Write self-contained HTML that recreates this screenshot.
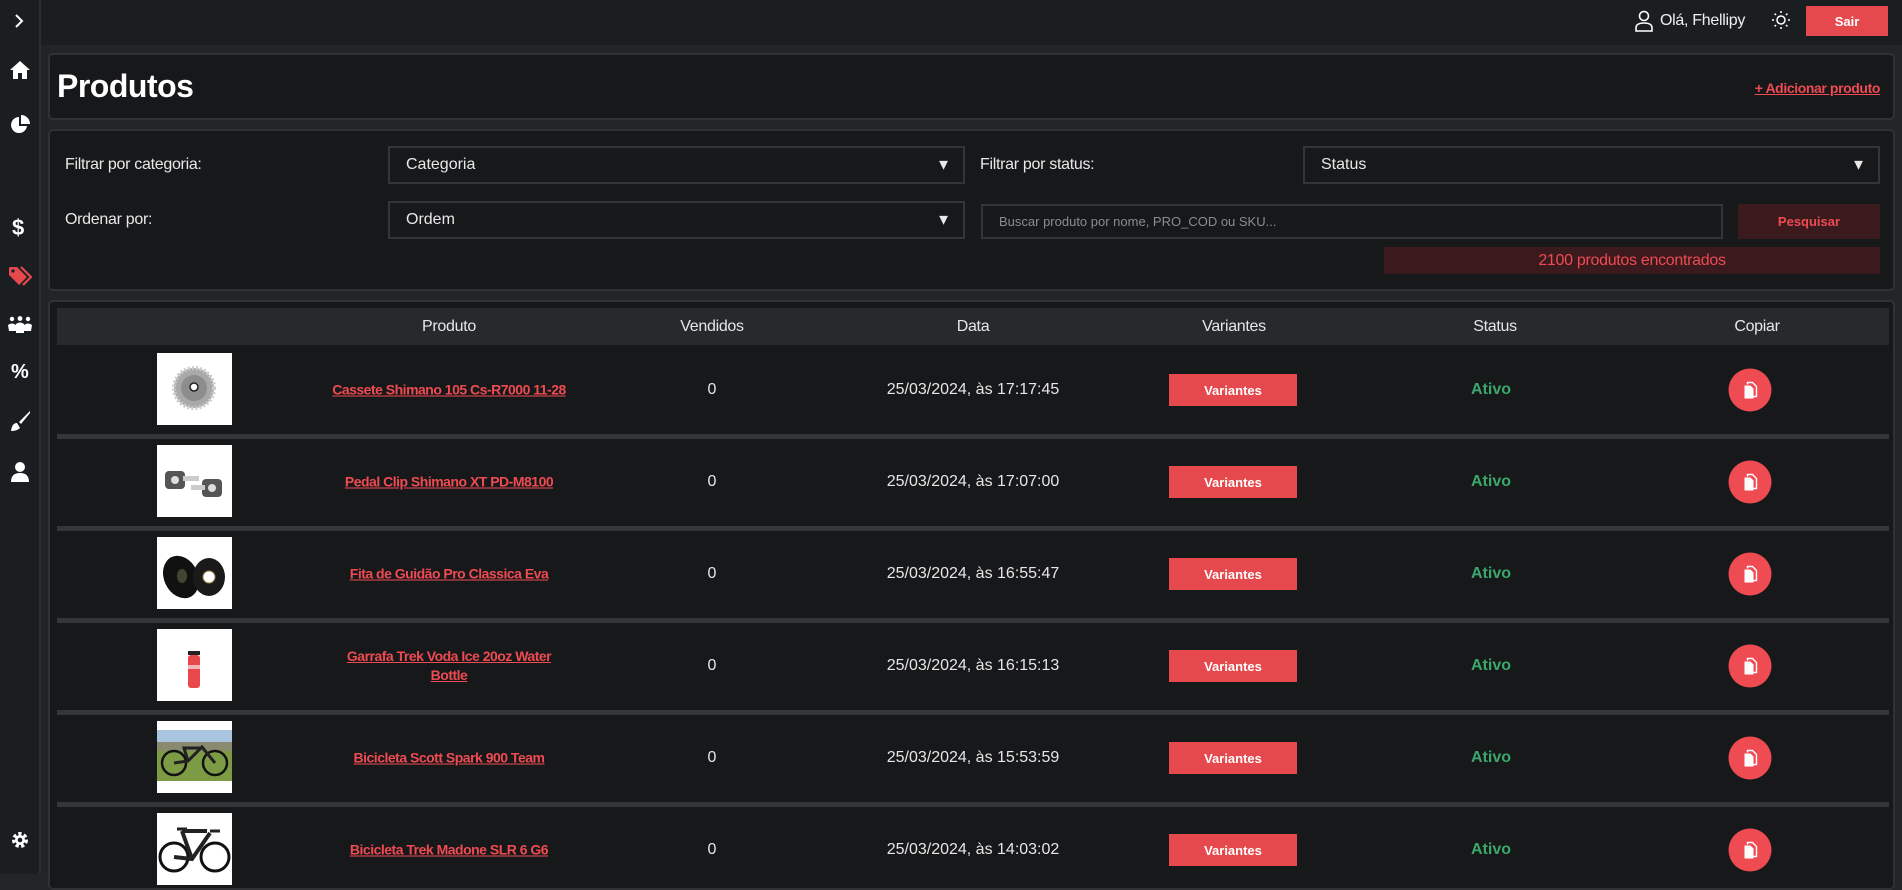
<!DOCTYPE html>
<html><head><meta charset="utf-8"><style>
*{box-sizing:border-box;margin:0;padding:0}
body{width:1902px;height:874px;overflow:hidden;background:#222528;font-family:"Liberation Sans",sans-serif;color:#e6e6e6;position:relative}
.a{position:absolute}
.side{left:0;top:0;width:41px;height:874px;background:#1b1e20;border-right:2px solid #2a2e31}
.top{left:41px;top:0;width:1861px;height:45px;background:#1b1e20}
.card{background:#17181a;border:2px solid #2e3235;border-radius:5px}
.lbl{font-size:16px;color:#e8e8e8;letter-spacing:-0.3px}
.sel{background:#17181a;border:2px solid #32363a;font-size:16px;padding-left:16px;display:flex;align-items:center;color:#e8e8e8}
.sel .ar{position:absolute;right:12px;top:50%;transform:translateY(-50%);font-size:15px}
.th{font-size:16px;text-align:center;transform:translateX(-50%);top:318px;letter-spacing:-0.3px}
.cell{transform:translate(-50%,-50%);text-align:center;white-space:nowrap}
.lnk{color:#ee4b52;font-weight:bold;font-size:14px;text-decoration:underline;line-height:19px;letter-spacing:-0.5px}
.btn{background:#e5484d;color:#fff;font-weight:bold;font-size:13px;width:128px;height:32px;display:flex;align-items:center;justify-content:center}
.st{color:#3aa86a;font-weight:bold;font-size:16px}
.cp{width:43px;height:43px;border-radius:50%;background:#ee4b52;display:flex;align-items:center;justify-content:center}
.img{width:75px;height:72px;background:#fff;overflow:hidden}
.sep{left:57px;width:1832px;height:5px;background:#33373a}
</style></head><body>
<div class="a side"></div>
<div class="a top"></div>
<svg class="a" style="left:11px;top:13px" width="16" height="16" viewBox="0 0 16 16"><path d="M5 2l6 6-6 6" stroke="#fff" stroke-width="2" fill="none"/></svg>
<svg class="a" style="left:9px;top:60px" width="22" height="20" viewBox="0 0 22 20"><path d="M11 1L1 10h3v9h5v-6h4v6h5v-9h3z" fill="#fff"/></svg>
<svg class="a" style="left:10px;top:115px" width="20" height="20" viewBox="0 0 20 20"><path d="M9 2a8 8 0 1 0 8 9H9z" fill="#fff"/><path d="M11 0v9h9a9 9 0 0 0-9-9z" fill="#fff"/></svg>
<div class="a" style="left:12px;top:215px;font-size:22px;font-weight:bold;color:#fff">$</div>
<svg class="a" style="left:8px;top:266px" width="24" height="22" viewBox="0 0 24 22"><path d="M1 2v7l10 10 8-8L9 1H2z" fill="#e5484d"/><circle cx="5" cy="5" r="1.6" fill="#1b1e20"/><path d="M13 1l10 10-8 8" stroke="#e5484d" stroke-width="2.2" fill="none"/></svg>
<svg class="a" style="left:7px;top:316px" width="26" height="18" viewBox="0 0 26 18"><circle cx="5" cy="3" r="2.2" fill="#fff"/><circle cx="13" cy="2.5" r="2.4" fill="#fff"/><circle cx="21" cy="3" r="2.2" fill="#fff"/><path d="M1 9q4-3 8 0v6H2zM9 8q4-3 8 0v9H9zM17 9q4-3 8 0l-1 6h-7z" fill="#fff"/></svg>
<div class="a" style="left:11px;top:361px;font-size:20px;font-weight:bold;color:#fff">%</div>
<svg class="a" style="left:9px;top:410px" width="22" height="22" viewBox="0 0 22 22"><path d="M21 1L10 12l2 2L21 3z" fill="#fff"/><path d="M8 13q-5 0-6 8 6 0 9-3z" fill="#fff"/></svg>
<svg class="a" style="left:10px;top:461px" width="20" height="22" viewBox="0 0 20 22"><circle cx="10" cy="6" r="5" fill="#fff"/><path d="M1 21q0-9 9-9t9 9z" fill="#fff"/></svg>
<svg class="a" style="left:10px;top:830px" width="20" height="20" viewBox="0 0 20 20"><circle cx="10" cy="10" r="6" fill="none" stroke="#fff" stroke-width="4" stroke-dasharray="3 2.3"/><circle cx="10" cy="10" r="5" fill="#fff"/><circle cx="10" cy="10" r="2.3" fill="#1b1e20"/></svg>
<svg class="a" style="left:1634px;top:10px" width="20" height="22" viewBox="0 0 20 22"><circle cx="10" cy="6" r="4.5" fill="none" stroke="#fff" stroke-width="1.6"/><path d="M2 21v-3q0-5 8-5t8 5v3z" fill="none" stroke="#fff" stroke-width="1.6"/></svg>
<div class="a" style="left:1660px;top:12px;font-size:16px;color:#eee;letter-spacing:-0.3px">Olá, Fhellipy</div>
<svg class="a" style="left:1771px;top:10px" width="20" height="20" viewBox="0 0 20 20"><circle cx="10" cy="10" r="4" fill="none" stroke="#fff" stroke-width="1.5"/><g stroke="#fff" stroke-width="1.5"><path d="M10 1v2M10 17v2M1 10h2M17 10h2M3.6 3.6l1.4 1.4M15 15l1.4 1.4M3.6 16.4L5 15M15 5l1.4-1.4"/></g></svg>
<div class="a" style="left:1806px;top:6px;width:82px;height:30px;background:#e5484d;color:#fff;font-weight:bold;font-size:13px;display:flex;align-items:center;justify-content:center">Sair</div>
<div class="a card" style="left:48px;top:53px;width:1847px;height:67px"></div>
<div class="a" style="left:57px;top:68px;font-size:32px;font-weight:bold;color:#fff;letter-spacing:-0.5px">Produtos</div>
<div class="a" style="right:22px;top:80px;font-size:14px;font-weight:bold;color:#ee4b52;text-decoration:underline;letter-spacing:-0.4px">+ Adicionar produto</div>
<div class="a card" style="left:48px;top:129px;width:1847px;height:162px"></div>
<div class="a lbl" style="left:65px;top:156px">Filtrar por categoria:</div>
<div class="a sel" style="left:388px;top:146px;width:577px;height:38px">Categoria<span class="ar">▼</span></div>
<div class="a lbl" style="left:980px;top:156px">Filtrar por status:</div>
<div class="a sel" style="left:1303px;top:146px;width:577px;height:38px">Status<span class="ar">▼</span></div>
<div class="a lbl" style="left:65px;top:211px">Ordenar por:</div>
<div class="a sel" style="left:388px;top:201px;width:577px;height:38px">Ordem<span class="ar">▼</span></div>
<div class="a sel" style="left:981px;top:204px;width:742px;height:35px;font-size:13px;color:#8a8d90">Buscar produto por nome, PRO_COD ou SKU...</div>
<div class="a" style="left:1738px;top:204px;width:142px;height:35px;background:#3b1a1d;color:#ee4b52;font-weight:bold;font-size:13px;display:flex;align-items:center;justify-content:center">Pesquisar</div>
<div class="a" style="left:1384px;top:247px;width:496px;height:27px;background:#3b1a1d;color:#ee4b52;font-size:16px;display:flex;align-items:center;justify-content:center;letter-spacing:-0.3px">2100 produtos encontrados</div>
<div class="a card" style="left:48px;top:300px;width:1847px;height:590px"></div>
<div class="a" style="left:57px;top:308px;width:1832px;height:37px;background:#262a2d"></div>
<div class="a th" style="left:449px">Produto</div>
<div class="a th" style="left:712px">Vendidos</div>
<div class="a th" style="left:973px">Data</div>
<div class="a th" style="left:1234px">Variantes</div>
<div class="a th" style="left:1495px">Status</div>
<div class="a th" style="left:1757px">Copiar</div>

<div class="a img" style="left:157px;top:353px"><svg width="75" height="72"><circle cx="37" cy="35" r="20" fill="#a9a9a9" stroke="#ccc" stroke-width="4" stroke-dasharray="2 2"/><circle cx="37" cy="35" r="13" fill="#8d8d8d"/><circle cx="37" cy="34" r="4" fill="#fff" stroke="#222" stroke-width="1.5"/></svg></div>
<div class="a cell lnk" style="left:449px;top:390px">Cassete Shimano 105 Cs-R7000 11-28</div>
<div class="a cell" style="left:712px;top:390px;font-size:16px">0</div>
<div class="a cell" style="left:973px;top:390px;font-size:16px">25/03/2024, às 17:17:45</div>
<div class="a cell btn" style="left:1233px;top:390px">Variantes</div>
<div class="a cell st" style="left:1491px;top:390px">Ativo</div>
<div class="a cell cp" style="left:1750px;top:390px"><svg width="16" height="18" viewBox="0 0 16 18"><path d="M5 3V1h5l4 4v10h-3" fill="none" stroke="#fff" stroke-width="1.4"/><path d="M2 4h6l3 3v10H2z" fill="#fff"/></svg></div>
<div class="a sep" style="top:434px"></div>
<div class="a img" style="left:157px;top:445px"><svg width="75" height="72"><rect x="8" y="26" width="20" height="18" rx="4" fill="#555"/><rect x="26" y="31" width="16" height="5" fill="#ccc"/><rect x="45" y="34" width="20" height="18" rx="4" fill="#555"/><rect x="34" y="40" width="14" height="5" fill="#ccc"/><circle cx="18" cy="35" r="4" fill="#ddd"/><circle cx="55" cy="43" r="4" fill="#ddd"/></svg></div>
<div class="a cell lnk" style="left:449px;top:482px">Pedal Clip Shimano XT PD-M8100</div>
<div class="a cell" style="left:712px;top:482px;font-size:16px">0</div>
<div class="a cell" style="left:973px;top:482px;font-size:16px">25/03/2024, às 17:07:00</div>
<div class="a cell btn" style="left:1233px;top:482px">Variantes</div>
<div class="a cell st" style="left:1491px;top:482px">Ativo</div>
<div class="a cell cp" style="left:1750px;top:482px"><svg width="16" height="18" viewBox="0 0 16 18"><path d="M5 3V1h5l4 4v10h-3" fill="none" stroke="#fff" stroke-width="1.4"/><path d="M2 4h6l3 3v10H2z" fill="#fff"/></svg></div>
<div class="a sep" style="top:526px"></div>
<div class="a img" style="left:157px;top:537px"><svg width="75" height="72"><ellipse cx="24" cy="40" rx="17" ry="22" fill="#111" transform="rotate(-25 24 40)"/><ellipse cx="25" cy="39" rx="5" ry="7" fill="#443"/><ellipse cx="52" cy="40" rx="16" ry="19" fill="#1a1a1a"/><ellipse cx="52" cy="40" rx="6" ry="6" fill="#fff" stroke="#984" stroke-width="1"/></svg></div>
<div class="a cell lnk" style="left:449px;top:574px">Fita de Guidão Pro Classica Eva</div>
<div class="a cell" style="left:712px;top:574px;font-size:16px">0</div>
<div class="a cell" style="left:973px;top:574px;font-size:16px">25/03/2024, às 16:55:47</div>
<div class="a cell btn" style="left:1233px;top:574px">Variantes</div>
<div class="a cell st" style="left:1491px;top:574px">Ativo</div>
<div class="a cell cp" style="left:1750px;top:574px"><svg width="16" height="18" viewBox="0 0 16 18"><path d="M5 3V1h5l4 4v10h-3" fill="none" stroke="#fff" stroke-width="1.4"/><path d="M2 4h6l3 3v10H2z" fill="#fff"/></svg></div>
<div class="a sep" style="top:618px"></div>
<div class="a img" style="left:157px;top:629px"><svg width="75" height="72"><rect x="31" y="22" width="12" height="4" fill="#222"/><rect x="31" y="26" width="12" height="33" rx="3" fill="#e8484c"/><rect x="31" y="36" width="12" height="4" fill="#fff" opacity=".6"/></svg></div>
<div class="a cell lnk" style="left:449px;top:666px">Garrafa Trek Voda Ice 20oz Water<br>Bottle</div>
<div class="a cell" style="left:712px;top:666px;font-size:16px">0</div>
<div class="a cell" style="left:973px;top:666px;font-size:16px">25/03/2024, às 16:15:13</div>
<div class="a cell btn" style="left:1233px;top:666px">Variantes</div>
<div class="a cell st" style="left:1491px;top:666px">Ativo</div>
<div class="a cell cp" style="left:1750px;top:666px"><svg width="16" height="18" viewBox="0 0 16 18"><path d="M5 3V1h5l4 4v10h-3" fill="none" stroke="#fff" stroke-width="1.4"/><path d="M2 4h6l3 3v10H2z" fill="#fff"/></svg></div>
<div class="a sep" style="top:710px"></div>
<div class="a img" style="left:157px;top:721px"><svg width="75" height="72"><rect y="9" width="75" height="12" fill="#a8c4de"/><rect y="21" width="75" height="9" fill="#8a8a70"/><rect y="30" width="75" height="30" fill="#7d9a45"/><circle cx="17" cy="42" r="12" fill="none" stroke="#111" stroke-width="2.5"/><circle cx="58" cy="42" r="12" fill="none" stroke="#111" stroke-width="2.5"/><path d="M17 42l14-2 14-14 13 16M31 40l-4-13h18" stroke="#222" stroke-width="3" fill="none"/></svg></div>
<div class="a cell lnk" style="left:449px;top:758px">Bicicleta Scott Spark 900 Team</div>
<div class="a cell" style="left:712px;top:758px;font-size:16px">0</div>
<div class="a cell" style="left:973px;top:758px;font-size:16px">25/03/2024, às 15:53:59</div>
<div class="a cell btn" style="left:1233px;top:758px">Variantes</div>
<div class="a cell st" style="left:1491px;top:758px">Ativo</div>
<div class="a cell cp" style="left:1750px;top:758px"><svg width="16" height="18" viewBox="0 0 16 18"><path d="M5 3V1h5l4 4v10h-3" fill="none" stroke="#fff" stroke-width="1.4"/><path d="M2 4h6l3 3v10H2z" fill="#fff"/></svg></div>
<div class="a sep" style="top:802px"></div>
<div class="a img" style="left:157px;top:813px"><svg width="75" height="72"><circle cx="17" cy="44" r="14" fill="none" stroke="#111" stroke-width="3"/><circle cx="58" cy="44" r="14" fill="none" stroke="#111" stroke-width="3"/><path d="M17 44l18 2 18-26M35 46l-10-28M25 18h25" stroke="#222" stroke-width="4" fill="none"/><path d="M20 16h10M53 18h10" stroke="#222" stroke-width="3"/></svg></div>
<div class="a cell lnk" style="left:449px;top:850px">Bicicleta Trek Madone SLR 6 G6</div>
<div class="a cell" style="left:712px;top:850px;font-size:16px">0</div>
<div class="a cell" style="left:973px;top:850px;font-size:16px">25/03/2024, às 14:03:02</div>
<div class="a cell btn" style="left:1233px;top:850px">Variantes</div>
<div class="a cell st" style="left:1491px;top:850px">Ativo</div>
<div class="a cell cp" style="left:1750px;top:850px"><svg width="16" height="18" viewBox="0 0 16 18"><path d="M5 3V1h5l4 4v10h-3" fill="none" stroke="#fff" stroke-width="1.4"/><path d="M2 4h6l3 3v10H2z" fill="#fff"/></svg></div>
</body></html>
